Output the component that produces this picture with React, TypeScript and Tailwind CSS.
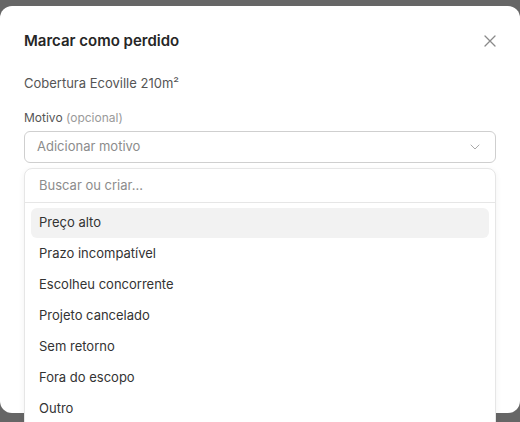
import { useState } from "react";
import { ChevronDown } from "lucide-react";

const motivos = [
  "Preço alto",
  "Prazo incompatível",
  "Escolheu concorrente",
  "Projeto cancelado",
  "Sem retorno",
  "Fora do escopo",
  "Outro",
];

export default function App() {
  const [busca, setBusca] = useState("");
  const [ativo, setAtivo] = useState(0);

  return (
    <div
      className="h-[422px] w-[520px] overflow-hidden bg-[#666666] pt-[6px]"
      style={{ fontFamily: "Inter, 'Noto Sans', sans-serif" }}
    >
      <div className="relative h-[407px] w-full rounded-xl bg-white px-6 pt-[25px]">
        <div className="flex h-5 items-center justify-between">
          <h2 className="text-[15px] font-semibold text-[#262626]">Marcar como perdido</h2>
          <button className="-mr-1 flex h-5 w-5 items-center justify-center text-[#8a8a8a]">
            <svg width="12" height="12" viewBox="0 0 12 12" fill="none" stroke="currentColor" strokeWidth="1.3" strokeLinecap="round">
              <path d="M1 1l10 10M11 1L1 11" />
            </svg>
          </button>
        </div>

        <p className="mt-[22px] h-5 text-[13px] leading-5 text-[#555555]">Cobertura Ecoville 210m²</p>

        <div className="relative mt-[17px]">
          <label className="block h-4 text-[12px] leading-4 text-[#555555]">
            Motivo <span className="text-[#9a9a9a]">(opcional)</span>
          </label>
          <button className="mt-[5px] flex h-8 w-full items-center justify-between rounded-md border border-[#cfcfcf] bg-white pl-3 pr-3 text-left">
            <span className="text-[13px] text-[#8c8c8c]">Adicionar motivo</span>
            <ChevronDown size={16} strokeWidth={1.5} className="text-[#aaaaaa]" />
          </button>

          {/* popover da lista de motivos */}
          <div className="absolute left-0 right-0 top-[58px] h-[300px] rounded-lg border border-[#e6e6e6] bg-white shadow-[0_2px_6px_rgba(0,0,0,0.06)]">
            <div className="flex h-[34px] items-center border-b border-[#e6e6e6] px-[14px]">
              <input
                value={busca}
                onChange={(e) => setBusca(e.target.value)}
                placeholder="Buscar ou criar..."
                className="w-full bg-transparent text-[13px] text-[#333333] outline-none placeholder:text-[#8c8c8c]"
              />
            </div>
            <ul className="px-[6px] pt-[5px]">
              {motivos
                .filter((m) => m.toLowerCase().includes(busca.toLowerCase()))
                .map((m, i) => (
                  <li
                    key={m}
                    onMouseEnter={() => setAtivo(i)}
                    className={
                      "mb-px flex h-[30px] items-center rounded-md px-2 text-[13px] text-[#333333] " +
                      (i === ativo ? "bg-[#f2f2f2]" : "")
                    }
                  >
                    {m}
                  </li>
                ))}
            </ul>
          </div>
        </div>
      </div>
    </div>
  );
}
